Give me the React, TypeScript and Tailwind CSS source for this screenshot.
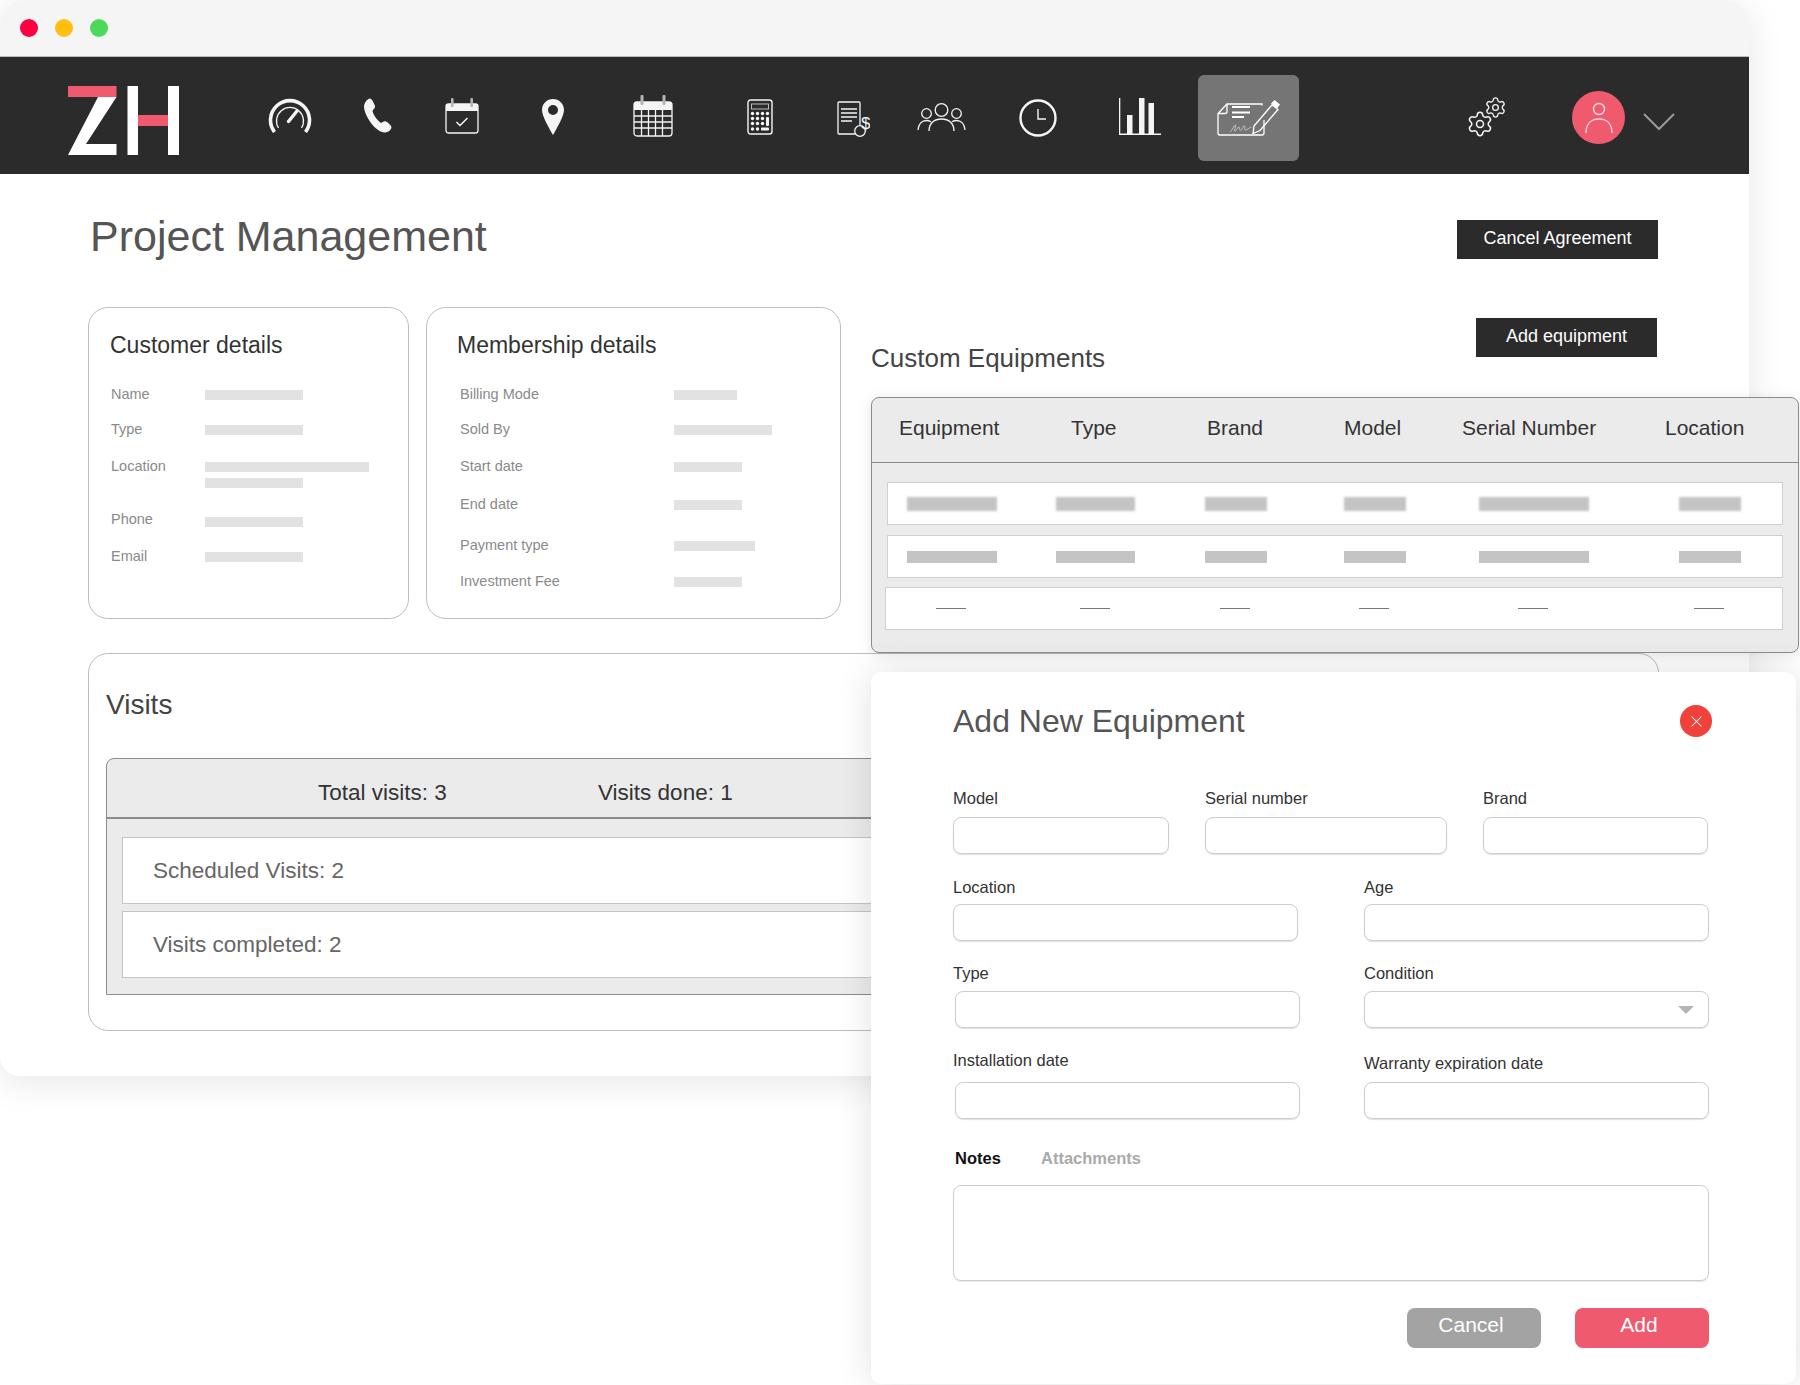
import { Settings, X } from "lucide-react";

function Logo({ className }: { className?: string }) {
  return (
    <svg className={className} width="111" height="69" viewBox="0 0 111 69">
      <rect x="0" y="0" width="48.5" height="11" fill="#ef5a6f" />
      <polygon points="30,11 48.5,11 18,58 48.5,58 48.5,69 0,69" fill="#fff" />
      <rect x="59.5" y="0" width="10.5" height="69" fill="#fff" />
      <rect x="100" y="0" width="11" height="69" fill="#fff" />
      <rect x="70" y="29" width="30" height="11" fill="#ef5a6f" />
    </svg>
  );
}

function GaugeIcon({ className }: { className?: string }) {
  return (
    <svg className={className} width="44" height="36" viewBox="0 0 44 36" fill="none" stroke="#f5f5f5">
      <path d="M6.5 35 A19.5 19.5 0 1 1 37.5 35" strokeWidth="3.6" />
      <path d="M10.5 31 A13.5 13.5 0 1 1 33.5 31" strokeWidth="1.3" />
      <path d="M20.5 24.5 L29 14" strokeWidth="3.4" strokeLinecap="round" />
    </svg>
  );
}

function PhoneIcon({ className }: { className?: string }) {
  return (
    <svg className={className} width="29" height="35" viewBox="0 0 29 35" fill="#f5f5f5">
      <path d="M7 .5C9 1 11 5 12 8c.5 2-2 3.500-2.500 5 1 4 4.500 9 8.500 12 1.500-.5 3-2.500 5-1.500 2 1 5.500 4 5.500 6-.5 3-4 5-7.500 5C12 33 2 19 1 9 1 5 4 1 7 .5Z" />
    </svg>
  );
}

function CalendarCheckIcon({ className }: { className?: string }) {
  return (
    <svg className={className} width="34" height="36" viewBox="0 0 34 36" fill="none">
      <rect x="1" y="6" width="32" height="29" rx="2.500" stroke="#f5f5f5" strokeWidth="1.300" />
      <path d="M1 13V8.500A2.500 2.500 0 0 1 3.500 6h27A2.500 2.500 0 0 1 33 8.500V13Z" fill="#f5f5f5" />
      <rect x="6" y="0" width="2.600" height="9" rx="1" fill="#b5b5b5" />
      <rect x="25.400" y="0" width="2.600" height="9" rx="1" fill="#b5b5b5" />
      <path d="M11.500 24l3.500 3.500 7.500-7.500" stroke="#f5f5f5" strokeWidth="1.500" />
    </svg>
  );
}

function PinIcon({ className }: { className?: string }) {
  return (
    <svg className={className} width="22" height="36" viewBox="0 0 22 36">
      <path
        fillRule="evenodd"
        fill="#f5f5f5"
        d="M11 0C5 0 0 4.700 0 11c0 6 7 18 11 25 4-7 11-19 11-25C22 4.700 17 0 11 0Zm0 6a5 5 0 1 1 0 10 5 5 0 0 1 0-10Z"
      />
    </svg>
  );
}

function CalendarIcon({ className }: { className?: string }) {
  const xs = [8.500, 15.500, 22.500, 29.500];
  const ys = [21, 27, 33];
  return (
    <svg className={className} width="40" height="42" viewBox="0 0 40 42" fill="none">
      <rect x="1" y="7" width="38" height="34" rx="3" stroke="#f5f5f5" strokeWidth="1.300" />
      <path d="M1 15v-5a3 3 0 0 1 3-3h32a3 3 0 0 1 3 3v5Z" fill="#f5f5f5" />
      {xs.map((x) => (
        <path key={x} d={`M${x} 15v26`} stroke="#f5f5f5" strokeWidth="1.300" />
      ))}
      {ys.map((y) => (
        <path key={y} d={`M1 ${y}h38`} stroke="#f5f5f5" strokeWidth="1.300" />
      ))}
      <rect x="7.500" y="0" width="3" height="10" rx="1" fill="#b5b5b5" />
      <rect x="29.500" y="0" width="3" height="10" rx="1" fill="#b5b5b5" />
    </svg>
  );
}

function CalculatorIcon({ className }: { className?: string }) {
  const rows = [14.500, 19.500, 24.500, 30];
  const cols = [5.500, 10.500, 15.500, 20.500];
  return (
    <svg className={className} width="26" height="36" viewBox="0 0 26 36" fill="none">
      <rect x="1" y="1" width="24" height="34" rx="2.500" stroke="#f5f5f5" strokeWidth="1.400" />
      <rect x="4.500" y="5" width="17" height="5" stroke="#bdbdbd" strokeWidth="1" />
      {rows.map((y, ri) =>
        cols.map((x, ci) =>
          (ci === 3 && ri > 0) || (ri === 3 && ci === 2) ? null : (
            <circle key={`${x}-${y}`} cx={x} cy={y} r="1.700" fill="#f5f5f5" />
          ),
        ),
      )}
      <rect x="19" y="18" width="3" height="9" rx="1" fill="#f5f5f5" />
      <rect x="14" y="28.500" width="8" height="3" rx="1" fill="#f5f5f5" />
    </svg>
  );
}

function DocDollarIcon({ className }: { className?: string }) {
  return (
    <svg className={className} width="33" height="36" viewBox="0 0 33 36" fill="none">
      <rect x="1" y="1" width="22" height="32" rx="1" stroke="#f5f5f5" strokeWidth="1.300" />
      <path d="M4 8h16M4 12h16M4 16h16M4 20h11" stroke="#f5f5f5" strokeWidth="1.300" />
      <circle cx="23" cy="30" r="5.300" fill="#2b2b2b" stroke="#f5f5f5" strokeWidth="1.300" />
      <text x="24" y="28" fontSize="17" fill="#f5f5f5" fontFamily="Liberation Sans, sans-serif">
        $
      </text>
    </svg>
  );
}

function PeopleIcon({ className }: { className?: string }) {
  return (
    <svg className={className} width="49" height="29" viewBox="0 0 49 29" fill="none" stroke="#f5f5f5" strokeWidth="1.300">
      <circle cx="24.500" cy="7" r="6.300" />
      <circle cx="9.500" cy="10.500" r="4.800" />
      <circle cx="39.500" cy="10.500" r="4.800" />
      <path d="M12 28c0-8 5.500-12 12.500-12S37 20 37 28" />
      <path d="M1 27c.5-6 4-9.500 8.500-9.500 1.500 0 3 .4 4.500 1.200" />
      <path d="M48 27c-.5-6-4-9.500-8.500-9.500-1.500 0-3 .4-4.500 1.200" />
    </svg>
  );
}

function ClockIcon({ className }: { className?: string }) {
  return (
    <svg className={className} width="38" height="38" viewBox="0 0 38 38" fill="none" stroke="#f5f5f5">
      <circle cx="19" cy="19" r="17.500" strokeWidth="2.400" />
      <path d="M19 10v10h8" strokeWidth="1.400" />
    </svg>
  );
}

function BarsIcon({ className }: { className?: string }) {
  return (
    <svg className={className} width="42" height="37" viewBox="0 0 42 37" fill="#f5f5f5">
      <rect x="0" y="0" width="1.300" height="37" />
      <rect x="0" y="35.500" width="42" height="1.500" />
      <rect x="8" y="17" width="5.500" height="19" />
      <rect x="20" y="0" width="5.500" height="36" />
      <rect x="29.500" y="5" width="5.500" height="31" />
    </svg>
  );
}

function ContractIcon() {
  return (
    <svg width="63" height="36" viewBox="0 0 63 36" fill="none" stroke="#fff">
      <path d="M45 5.500V4H10L1 13.500V33a2 2 0 0 0 2 2h42a2 2 0 0 0 2-2V20" strokeWidth="1.300" />
      <path d="M1 13.500h7a2 2 0 0 0 2-2V4" strokeWidth="1.300" />
      <path d="M15 7h18M15 12.500h18M15 17h12" strokeWidth="1.800" />
      <path d="M13 32c2-1 4-7 5.500-7 1 0-2 6-.5 6s3-5 4-4 0 4 2 3 2-5 3.500-4-1 4 1 4 3-2 6-3" strokeWidth=".7" stroke="#e0e0e0" />
      <path d="M37 26l18-21 6 4.500-18 21-7 3Z" strokeWidth="1.300" />
      <path d="M54 3.500L57.500 0 63 4.500 60 8.500Z" fill="#fff" stroke="none" />
    </svg>
  );
}

function GearsIcon({ className }: { className?: string }) {
  return (
    <div className={`relative h-[42px] w-[41px] ${className ?? ""}`}>
      <Settings size={28} strokeWidth={1.300} color="#f5f5f5" className="absolute bottom-0 left-0" />
      <Settings size={23} strokeWidth={1.400} color="#f5f5f5" className="absolute right-0 top-0" />
    </div>
  );
}

function Avatar({ className }: { className?: string }) {
  return (
    <div className={`flex h-[53px] w-[53px] items-center justify-center rounded-full bg-[#ef5a6f] ${className ?? ""}`}>
      <svg width="28" height="32" viewBox="0 0 28 32" fill="none" stroke="#f7d9dd" strokeWidth="1.400">
        <circle cx="14" cy="7" r="5.500" />
        <path d="M1 31c0-9 5-14 13-14s13 5 13 14" />
      </svg>
    </div>
  );
}

function Chevron({ className }: { className?: string }) {
  return (
    <svg className={className} width="32" height="18" viewBox="0 0 32 18" fill="none" stroke="#9a9a9a" strokeWidth="2">
      <path d="M1 1l15 15L31 1" />
    </svg>
  );
}

function Bar({ className }: { className: string }) {
  return <div className={`h-[10px] bg-[#e2e2e2] ${className}`} />;
}

function Customer() {
  return (
    <div className="h-[312px] w-[321px] shrink-0 rounded-[20px] border border-[#bdbdbd] pl-[21px] pt-[23px]">
      <h2 className="text-[23px] leading-[28px] text-[#333]">Customer details</h2>
      <div className="mt-[25px] pl-[1px] text-[14.500px] leading-[20px] text-[#8a8a8a]">
        <div className="flex">
          <div className="w-[94px]">Name</div>
          <Bar className="mt-[6px] w-[98px]" />
        </div>
        <div className="mt-[15px] flex">
          <div className="w-[94px]">Type</div>
          <Bar className="mt-[6px] w-[98px]" />
        </div>
        <div className="mt-[17px] flex">
          <div className="w-[94px]">Location</div>
          <div className="mt-[6px] flex flex-col gap-[6px]">
            <Bar className="w-[164px]" />
            <Bar className="w-[98px]" />
          </div>
        </div>
        <div className="mt-[21px] flex">
          <div className="w-[94px]">Phone</div>
          <Bar className="mt-[8px] w-[98px]" />
        </div>
        <div className="mt-[17px] flex">
          <div className="w-[94px]">Email</div>
          <Bar className="mt-[6px] w-[98px]" />
        </div>
      </div>
    </div>
  );
}

const membership = [
  { label: "Billing Mode", bar: "w-[63px]", row: "mt-0" },
  { label: "Sold By", bar: "w-[98px]", row: "mt-[15px]" },
  { label: "Start date", bar: "w-[68px]", row: "mt-[17px]" },
  { label: "End date", bar: "w-[68px]", row: "mt-[18px]" },
  { label: "Payment type", bar: "w-[81px]", row: "mt-[21px]" },
  { label: "Investment Fee", bar: "w-[68px]", row: "mt-[16px]" },
];

function Membership() {
  return (
    <div className="h-[312px] w-[415px] shrink-0 rounded-[20px] border border-[#bdbdbd] pl-[30px] pt-[23px]">
      <h2 className="text-[23px] leading-[28px] text-[#333]">Membership details</h2>
      <div className="mt-[25px] pl-[3px] text-[14.500px] leading-[20px] text-[#8a8a8a]">
        {membership.map((m) => (
          <div key={m.label} className={`flex ${m.row}`}>
            <div className="w-[214px]">{m.label}</div>
            <Bar className={`mt-[6px] ${m.bar}`} />
          </div>
        ))}
      </div>
    </div>
  );
}

const cols = ["w-[90px]", "w-[79px]", "w-[62px]", "w-[62px]", "w-[110px]", "w-[62px]"];

function Equipments() {
  return (
    <div className="relative z-10 h-[256px] w-[928px] rounded-[8px] border border-[#8c8c8c] bg-[#ebebeb] shadow-[0_2px_14px_rgba(0,0,0,0.1)]">
      <div className="grid h-[65px] grid-cols-[172px_136px_137px_118px_203px_90px] items-center border-b border-[#8c8c8c] pb-[5px] pl-[27px] text-[21px] text-[#333]">
        <div>Equipment</div>
        <div>Type</div>
        <div>Brand</div>
        <div>Model</div>
        <div>Serial Number</div>
        <div>Location</div>
      </div>
      <div className="mx-[15px] mt-[19px] grid h-[43px] grid-cols-[149px_149px_139px_135px_199.500px_62px] items-center border border-[#cfcfcf] bg-white pl-[19px]">
        {cols.map((c) => (
          <div key={c + "a"} className={`h-[14px] bg-[#c4c4c4] blur-[1px] ${c}`} />
        ))}
      </div>
      <div className="mx-[15px] mt-[10px] grid h-[43px] grid-cols-[149px_149px_139px_135px_199.500px_62px] items-center border border-[#cfcfcf] bg-white pl-[19px]">
        {cols.map((c) => (
          <div key={c + "b"} className={`h-[12px] bg-[#c4c4c4] ${c}`} />
        ))}
      </div>
      <div className="ml-[13px] mr-[15px] mt-[9px] grid h-[43px] grid-cols-[149px_149px_139px_135px_199.500px_62px] items-center border border-[#cfcfcf] bg-white pl-[20px]">
        {cols.map((c) => (
          <div key={c + "c"} className={`flex justify-center ${c}`}>
            <div className="h-[1.500px] w-[30px] bg-[#777]" />
          </div>
        ))}
      </div>
    </div>
  );
}

function Visits() {
  return (
    <div className="ml-[88px] h-[378px] w-[1571px] rounded-[20px] border border-[#bdbdbd] pl-[17px] pt-[35px]">
      <h2 className="text-[28px] leading-[32px] text-[#444]">Visits</h2>
      <div className="mt-[37px] h-[237px] w-[1536px] rounded-t-[8px] border border-[#8c8c8c] bg-[#ebebeb]">
        <div className="flex h-[60px] items-center border-b-2 border-[#8c8c8c] pt-[10px] text-[22.500px] text-[#333]">
          <div className="ml-[211px] w-[280px]">Total visits: 3</div>
          <div>Visits done: 1</div>
        </div>
        <div className="mx-[15px] mt-[18px] flex h-[67px] items-center border border-[#c4c4c4] bg-white pl-[30px] text-[22.500px] text-[#666]">
          Scheduled Visits: 2
        </div>
        <div className="mx-[15px] mt-[7px] flex h-[67px] items-center border border-[#c4c4c4] bg-white pl-[30px] text-[22.500px] text-[#666]">
          Visits completed: 2
        </div>
      </div>
    </div>
  );
}

function Field({
  label,
  width,
  gap,
  inset,
  select,
}: {
  label: string;
  width: string;
  gap: string;
  inset?: string;
  select?: boolean;
}) {
  return (
    <div className={`flex flex-col ${width}`}>
      <label className="text-[16.500px] leading-[20px] text-[#333]">{label}</label>
      <div className={`relative h-[37px] rounded-[8px] border border-[#cdcdcd] shadow-[0_1px_1px_rgba(0,0,0,0.12)] ${gap} ${inset ?? ""}`}>
        {select ? (
          <div className="absolute right-[14px] top-[14px] h-0 w-0 border-x-[8px] border-t-[8px] border-x-transparent border-t-[#b5b5b5]" />
        ) : null}
      </div>
    </div>
  );
}

function AddEquipmentModal() {
  return (
    <div className="absolute left-[871px] top-[672px] z-20 h-[712px] w-[925px] rounded-[10px] bg-white pl-[82px] pr-[87px] pt-[29px] shadow-[0_0_36px_rgba(0,0,0,0.12)]">
      <div className="flex items-start justify-between">
        <h2 className="text-[32px] leading-[40px] text-[#555]">Add New Equipment</h2>
        <div className="-mr-[3px] mt-[4px] flex h-[32px] w-[32px] items-center justify-center rounded-full bg-[#f0413a]">
          <X size={19} strokeWidth={1.300} color="#fff" />
        </div>
      </div>
      <div className="mt-[47px] flex gap-[36px]">
        <Field label="Model" width="w-[216px]" gap="mt-[9px]" />
        <Field label="Serial number" width="w-[242px]" gap="mt-[9px]" />
        <Field label="Brand" width="w-[225px]" gap="mt-[9px]" />
      </div>
      <div className="mt-[23px] flex gap-[66px]">
        <Field label="Location" width="w-[345px]" gap="mt-[7px]" />
        <Field label="Age" width="w-[345px]" gap="mt-[7px]" />
      </div>
      <div className="mt-[22px] flex gap-[64px]">
        <Field label="Type" width="w-[347px]" gap="mt-[8px]" inset="ml-[2px]" />
        <Field label="Condition" width="w-[345px]" gap="mt-[8px]" select />
      </div>
      <div className="mt-[22px] flex items-start gap-[64px]">
        <Field label="Installation date" width="w-[347px]" gap="mt-[12px]" inset="ml-[2px]" />
        <div className="mt-[3px]">
          <Field label="Warranty expiration date" width="w-[345px]" gap="mt-[9px]" />
        </div>
      </div>
      <div className="mt-[29px] flex pl-[2px] text-[16.500px] font-bold leading-[20px]">
        <div className="w-[86px] text-[#111]">Notes</div>
        <div className="text-[#aaa]">Attachments</div>
      </div>
      <textarea className="mt-[17px] block h-[96px] w-[756px] resize-none rounded-[8px] border border-[#cdcdcd] shadow-[0_1px_1px_rgba(0,0,0,0.1)]" />
      <div className="mt-[27px] flex w-[756px] justify-end gap-[34px] text-[21px] text-white">
        <button className="h-[40px] w-[134px] rounded-[8px] bg-[#a3a3a3] pb-[6px] pr-[6px]">Cancel</button>
        <button className="h-[40px] w-[134px] rounded-[8px] bg-[#ef5a6f] pb-[6px] pr-[6px]">Add</button>
      </div>
    </div>
  );
}

export default function App() {
  return (
    <div className="relative h-[1385px] w-[1800px] overflow-hidden bg-white font-['Liberation_Sans',Arial,sans-serif]">
      <div className="h-[1076px] w-[1749px] rounded-b-[20px] rounded-t-[24px] bg-white shadow-[0_6px_36px_rgba(0,0,0,0.1)]">
        <div className="flex h-[57px] items-center gap-[17px] rounded-t-[24px] border-b border-[#bbb] bg-[#f5f5f5] pl-[20px]">
          <div className="h-[18px] w-[18px] rounded-full bg-[#ff0040]" />
          <div className="h-[18px] w-[18px] rounded-full bg-[#ffbf0f]" />
          <div className="h-[18px] w-[18px] rounded-full bg-[#4cd95a]" />
        </div>
        <nav className="flex h-[117px] items-start bg-[#2b2b2b] pl-[68px]">
          <Logo className="mt-[29px]" />
          <GaugeIcon className="ml-[89px] mt-[40px]" />
          <PhoneIcon className="ml-[51px] mt-[41px]" />
          <CalendarCheckIcon className="ml-[53px] mt-[41px]" />
          <PinIcon className="ml-[63px] mt-[42px]" />
          <CalendarIcon className="ml-[69px] mt-[38px]" />
          <CalculatorIcon className="ml-[74px] mt-[42px]" />
          <DocDollarIcon className="ml-[64px] mt-[44px]" />
          <PeopleIcon className="ml-[47px] mt-[46px]" />
          <ClockIcon className="ml-[53px] mt-[42px]" />
          <BarsIcon className="ml-[62px] mt-[41px]" />
          <div className="ml-[37px] mt-[18px] flex h-[86px] w-[101px] items-center justify-center rounded-[6px] bg-[#757575]">
            <ContractIcon />
          </div>
          <GearsIcon className="ml-[167px] mt-[39px]" />
          <Avatar className="ml-[65px] mt-[34px]" />
          <Chevron className="ml-[18px] mt-[56px]" />
        </nav>
        <div className="flex h-[133px] items-start justify-between pl-[90px] pr-[91px] pt-[36px]">
          <h1 className="text-[43px] leading-[52px] text-[#555]">Project Management</h1>
          <button className="mt-[10px] h-[39px] w-[201px] bg-[#2b2b2b] pb-[3px] text-[18px] text-white">
            Cancel Agreement
          </button>
        </div>
        <div className="flex h-[346px] items-start pl-[88px]">
          <Customer />
          <div className="ml-[17px]">
            <Membership />
          </div>
          <div className="ml-[30px]">
            <div className="flex h-[90px] w-[786px] items-start justify-between">
              <h2 className="mt-[36px] text-[26px] leading-[30px] text-[#444]">Custom Equipments</h2>
              <button className="mt-[11px] h-[39px] w-[181px] bg-[#2b2b2b] pb-[3px] text-[18px] text-white">
                Add equipment
              </button>
            </div>
            <Equipments />
          </div>
        </div>
        <Visits />
      </div>
      <AddEquipmentModal />
    </div>
  );
}
